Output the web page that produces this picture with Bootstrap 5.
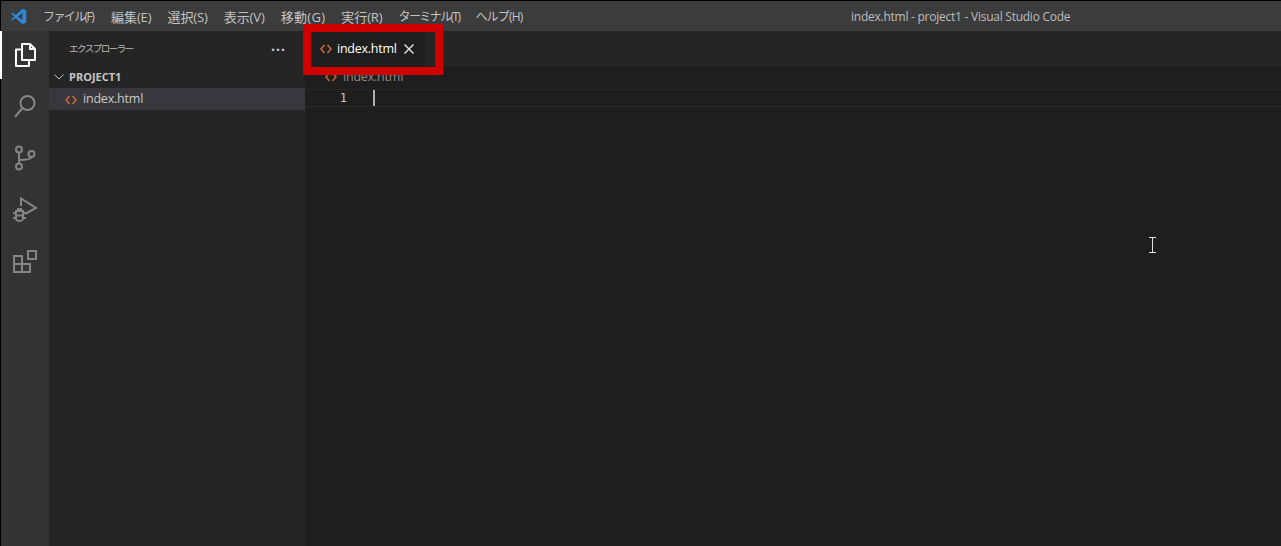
<!DOCTYPE html>
<html lang="ja">
<head>
<meta charset="utf-8">
<title>index.html - project1 - Visual Studio Code</title>
<link rel="stylesheet" href="https://cdn.jsdelivr.net/npm/bootstrap@5.3.0/dist/css/bootstrap.min.css">
<style>
html,body{height:546px;overflow:hidden;background:#000}
body{font-family:"Open Sans","Noto Sans CJK JP",sans-serif;color:#ccc;font-size:13px;position:relative}
.vs-shell{height:545px;margin-top:1px;margin-left:1px}
.vs-title{height:30px;background:#3c3c3c;flex:none;position:relative}
.vs-logo{width:42px;flex:none;padding-left:9px}
.vs-menu{gap:16px;font-size:12px;color:#c4c4c4;padding-top:2px;line-height:16px}
.vs-kanji{font-size:13px;letter-spacing:-.1px}
.vs-kanji-wide{letter-spacing:.3px}
.vs-kana{letter-spacing:-1.6px}
.vs-kana-first{margin-right:2px}
.vs-kana-help{letter-spacing:-.8px}
.vs-wintitle{position:absolute;left:850px;top:7px;font-size:12px;letter-spacing:-.25px;color:#bdbdbd;line-height:17px}
.vs-body{min-height:0}
.vs-activity{width:48px;background:#333;flex:none;position:relative}
.vs-act{height:52px;width:48px}
.vs-act-on{border-left:2px solid #fff;margin-left:-1px;width:49px;height:48px;margin-bottom:1px}
.vs-side{width:256px;background:#252526;flex:none}
.vs-side-head{height:35px;padding:2px 19px 0 20px;font-size:9.500px;color:#bbb;letter-spacing:-1.500px}
.vs-dots{font-size:14px;font-weight:700;letter-spacing:1px;line-height:8px;color:#ccc}
.vs-proj{height:22px;font-size:11px;font-weight:700;color:#c5c5c5;padding-left:5px;gap:5px}
.vs-file{height:22px;background:#37373d;padding:1px 0 0 16px;gap:6px;font-size:12.500px;letter-spacing:-.2px;color:#ccc}
.vs-tabs{height:35px;background:#252526;flex:none;padding-left:6px}
.vs-tab{width:114px;background:#1e1e1e;padding:1px 0 0 9px;gap:5px;color:#fff;font-size:12.500px;letter-spacing:-.25px}
.vs-tab-x{margin-left:1px}
.vs-editor{background:#1e1e1e;min-width:0}
.vs-crumb{height:22px;padding-left:20px;gap:6px;font-size:12.500px;color:#8c8c8c;letter-spacing:-.2px}
.vs-line{height:18px;border-top:1px solid #282828;border-bottom:1px solid #282828;margin-top:1px}
.vs-num{width:68px;flex:none;padding-right:26px;text-align:right;font-family:"DejaVu Sans Mono",monospace;font-size:12px;color:#c6c6c6;line-height:16px}
.vs-caret{width:2px;height:16px;background:#aeafad}
.vs-hl{position:absolute;left:303px;top:24px;width:140px;height:51px;border:8px solid #d00000;pointer-events:none}
.vs-cursor{position:absolute;left:1148px;top:237px}
</style>
</head>
<body>
<div class="vs-shell d-flex flex-column">
  <header class="vs-title d-flex align-items-center">
    <div class="vs-logo d-flex">
      <svg width="17" height="17" viewBox="0 0 24 24"><path fill="#2f86d8" d="M17.500 1 23 3.600v16.800L17.500 23 8 14l-4.600 3.600L1.500 16.500 6 12 1.500 7.500 3.400 6.400 8 10z"/><path fill="#3c3c3c" d="M17.500 7 11 12l6.500 5z"/></svg>
    </div>
    <nav class="vs-menu d-flex">
      <span class="vs-kana vs-kana-first">ファイル(F)</span><span class="vs-kanji">編集(E)</span><span class="vs-kanji">選択(S)</span><span class="vs-kanji">表示(V)</span><span class="vs-kanji vs-kanji-wide">移動(G)</span><span class="vs-kanji">実行(R)</span><span class="vs-kana">ターミナル(T)</span><span class="vs-kana vs-kana-help">ヘルプ(H)</span>
    </nav>
    <div class="vs-wintitle">index.html - project1 - Visual Studio Code</div>
  </header>
  <div class="vs-body d-flex flex-grow-1">
    <aside class="vs-activity">
      <div class="vs-act vs-act-on d-flex align-items-center justify-content-center">
        <svg width="24" height="26" viewBox="0 0 24 26" fill="none" stroke="#fff" stroke-width="2" stroke-linejoin="round"><path d="M8 2h8l5 5v11H8z"/><path d="M16 2v5h5"/><path d="M8 7.500H2V24h13v-6"/></svg>
      </div>
      <div class="vs-act d-flex align-items-center justify-content-center">
        <svg width="24" height="26" viewBox="0 0 24 26" fill="none" stroke="#858585" stroke-width="2"><circle cx="14.500" cy="10" r="7"/><path d="M9.500 15 2 24"/></svg>
      </div>
      <div class="vs-act d-flex align-items-center justify-content-center">
        <svg width="24" height="26" viewBox="0 0 24 26" fill="none" stroke="#858585" stroke-width="2"><circle cx="6" cy="4.500" r="3"/><circle cx="6" cy="21.500" r="3"/><circle cx="18.500" cy="9" r="3"/><path d="M6 7.500v11M6 15c7 0 12-1 12.500-3"/></svg>
      </div>
      <div class="vs-act d-flex align-items-center justify-content-center">
        <svg width="26" height="26" viewBox="0 0 26 26" fill="none" stroke="#858585" stroke-width="2"><path d="M9 9V1.500L24 11l-11 6"/><path d="M4 14h7v8a3 3 0 0 1-3 2H7a3 3 0 0 1-3-2z"/><path d="M1 16h3M11 16h3M1 21h3M11 21h3M4 18.500h7M5 14l1-2h3l1 2"/></svg>
      </div>
      <div class="vs-act d-flex align-items-center justify-content-center">
        <svg width="26" height="26" viewBox="0 0 26 26" fill="none" stroke="#858585" stroke-width="2"><path d="M2 7h8v16H2zM2 15h16v8h-8"/><path d="M10 15v8"/><path d="M16 2h8v8h-8z"/></svg>
      </div>
    </aside>
    <aside class="vs-side">
      <div class="vs-side-head d-flex align-items-center justify-content-between">
        <span>エクスプローラー</span><span class="vs-dots">···</span>
      </div>
      <div class="vs-proj d-flex align-items-center">
        <svg width="10" height="10" viewBox="0 0 10 10" fill="none" stroke="#c5c5c5" stroke-width="1"><path d="M.5 2.500 5 7l4.500-4.500"/></svg>
        <span>PROJECT1</span>
      </div>
      <div class="vs-file d-flex align-items-center">
        <svg width="12" height="10" viewBox="0 0 12 10" fill="none" stroke="#d0683a" stroke-width="1.500"><path d="M4.500 1 1 5l3.500 4M7.500 1 11 5 7.500 9"/></svg>
        <span>index.html</span>
      </div>
    </aside>
    <main class="vs-editor flex-grow-1 d-flex flex-column">
      <div class="vs-tabs d-flex">
        <div class="vs-tab d-flex align-items-center">
          <svg width="12" height="10" viewBox="0 0 12 10" fill="none" stroke="#d0683a" stroke-width="1.500"><path d="M4.500 1 1 5l3.500 4M7.500 1 11 5 7.500 9"/></svg>
          <span>index.html</span>
          <svg class="vs-tab-x" width="12" height="12" viewBox="0 0 12 12" fill="none" stroke="#e8e8e8" stroke-width="1.400"><path d="M1.500 1.500l9 9M10.500 1.500l-9 9"/></svg>
        </div>
      </div>
      <div class="vs-crumb d-flex align-items-center">
        <svg width="12" height="10" viewBox="0 0 12 10" fill="none" stroke="#c0623a" stroke-width="1.500"><path d="M4.500 1 1 5l3.500 4M7.500 1 11 5 7.500 9"/></svg>
        <span>index.html</span>
      </div>
      <div class="vs-line d-flex align-items-center">
        <div class="vs-num">1</div>
        <div class="vs-caret"></div>
      </div>
    </main>
  </div>
</div>
<div class="vs-hl"></div>
<svg class="vs-cursor" width="9" height="16" viewBox="0 0 9 16" fill="none" stroke="#e0e0e0" stroke-width="1"><path d="M1 .5h7M1 15.500h7M4.500 .5v15"/></svg>
</body>
</html>
